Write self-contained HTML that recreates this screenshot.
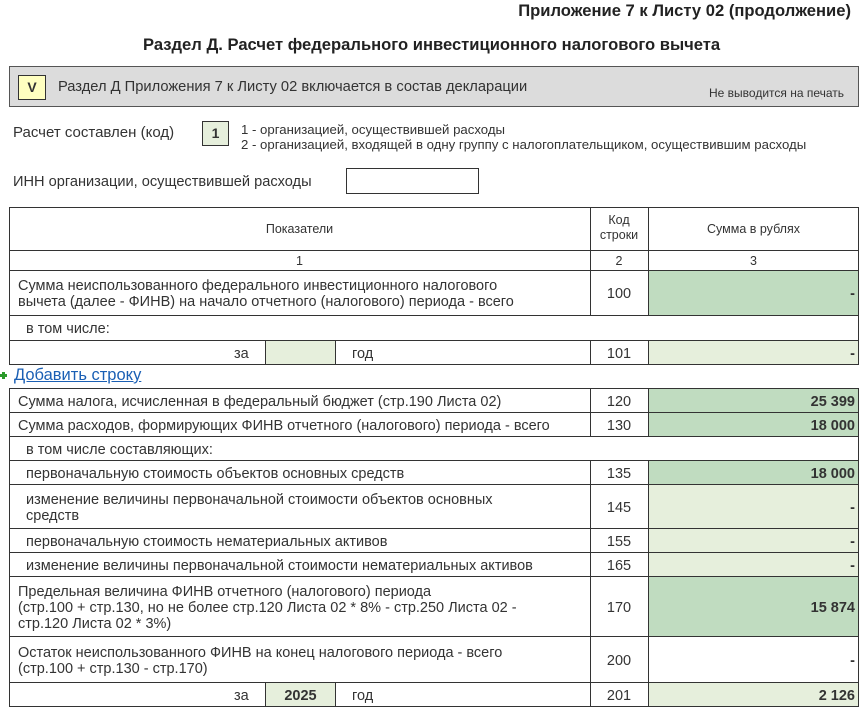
<!DOCTYPE html>
<html><head><meta charset="utf-8"><style>
*{box-sizing:border-box;margin:0;padding:0}
body{width:859px;height:707px;background:#fff;font-family:"Liberation Sans",Arial,sans-serif;font-size:14.5px;color:#333;position:relative;overflow:hidden}
.a{position:absolute}
.b{position:absolute;border:1px solid #333}
.t{position:absolute;white-space:nowrap;line-height:16px}
.g1{background:#e6efdc}.g2{background:#c0dcc0}
.r{text-align:right;padding-right:3px;font-weight:bold;font-size:14.5px}
.c{text-align:center}
</style></head><body>
<div class="t" style="right:8px;top:2px;font-size:16.6px;font-weight:bold;color:#222;line-height:18px">Приложение 7 к Листу 02 (продолжение)</div>
<div class="t" style="left:143px;top:36px;font-size:16.6px;font-weight:bold;color:#222;line-height:18px">Раздел Д. Расчет федерального инвестиционного налогового вычета</div>

<div class="b" style="left:9px;top:66px;width:850px;height:41px;background:#dcdcdc;border-color:#555"></div>
<div class="b" style="left:18px;top:75px;width:28px;height:25px;background:#ffffc0;text-align:center;line-height:23px;font-weight:bold;font-size:14px">V</div>
<div class="t" style="left:58px;top:79px;font-size:14.7px">Раздел Д Приложения 7 к Листу 02 включается в состав декларации</div>
<div class="t" style="left:709px;top:85px;font-size:12px">Не выводится на печать</div>

<div class="t" style="left:13px;top:125px;font-size:15px">Расчет составлен (код)</div>
<div class="b" style="left:202px;top:121px;width:27px;height:25px;background:#e6efdc;text-align:center;line-height:23px;font-weight:bold;font-size:14px">1</div>
<div class="t" style="left:241px;top:122px;font-size:13.2px;line-height:15px">1 - организацией, осуществившей расходы<br>2 - организацией, входящей в одну группу с налогоплательщиком, осуществившим расходы</div>
<div class="t" style="left:13px;top:174px;font-size:14.6px">ИНН организации, осуществившей расходы</div>
<div class="b" style="left:346px;top:168px;width:133px;height:26px"></div>

<div class="b" style="left:9px;top:207px;width:850px;height:64px"></div>
<div class="a" style="left:9px;top:250px;width:850px;height:1px;background:#333"></div>
<div class="a" style="left:590px;top:207px;width:1px;height:64px;background:#333"></div>
<div class="a" style="left:648px;top:207px;width:1px;height:64px;background:#333"></div>
<div class="t c" style="left:9px;top:221px;width:581px;font-size:12.5px">Показатели</div>
<div class="t c" style="left:590px;top:213px;width:58px;font-size:12.5px;line-height:15px">Код<br>строки</div>
<div class="t c" style="left:648px;top:221px;width:211px;font-size:12.5px">Сумма в рублях</div>
<div class="t c" style="left:9px;top:253px;width:581px;font-size:12.5px">1</div>
<div class="t c" style="left:590px;top:253px;width:58px;font-size:12.5px">2</div>
<div class="t c" style="left:648px;top:253px;width:211px;font-size:12.5px">3</div>

<div id="rows"></div>
<script>
var rows=[
[270,46,'Сумма неиспользованного федерального инвестиционного налогового<br>вычета (далее - ФИНВ) на начало отчетного (налогового) периода - всего',18,'100','g2','-'],
[315,26,'в том числе:',26,null],
[340,25,'',0,'101','g1','-','za',''],
[388,25,'Сумма налога, исчисленная в федеральный бюджет (стр.190 Листа 02)',18,'120','g2','25 399'],
[412,25,'Сумма расходов, формирующих ФИНВ отчетного (налогового) периода - всего',18,'130','g2','18 000'],
[436,25,'в том числе составляющих:',26,null],
[460,25,'первоначальную стоимость объектов основных средств',26,'135','g2','18 000'],
[484,45,'изменение величины первоначальной стоимости объектов основных<br>средств',26,'145','g1','-'],
[528,25,'первоначальную стоимость нематериальных активов',26,'155','g1','-'],
[552,25,'изменение величины первоначальной стоимости нематериальных активов',26,'165','g1','-'],
[576,61,'Предельная величина ФИНВ отчетного (налогового) периода<br>(стр.100 + стр.130, но не более стр.120 Листа 02 * 8% - стр.250 Листа 02 -<br>стр.120 Листа 02 * 3%)',18,'170','g2','15 874'],
[636,47,'Остаток неиспользованного ФИНВ на конец налогового периода - всего<br>(стр.100 + стр.130 - стр.170)',18,'200','','-'],
[682,25,'',0,'201','g1','2 126','za','2025']
];
var h='';
rows.forEach(function(r){
 var y=r[0],ht=r[1],n=(r[2].match(/<br>/g)||[]).length+1,ty=y+1+Math.round((ht-n*16)/2);
 var cy=y+1+Math.round((ht-16)/2);
 h+='<div class="b" style="left:9px;top:'+y+'px;width:850px;height:'+ht+'px"></div>';
 if(r[4]){
  h+='<div class="a '+r[5]+'" style="left:649px;top:'+(y+1)+'px;width:209px;height:'+(ht-2)+'px"></div>';
  h+='<div class="a" style="left:590px;top:'+y+'px;width:1px;height:'+ht+'px;background:#333"></div>';
  h+='<div class="a" style="left:648px;top:'+y+'px;width:1px;height:'+ht+'px;background:#333"></div>';
  h+='<div class="t c" style="left:590px;top:'+cy+'px;width:58px">'+r[4]+'</div>';
  h+='<div class="t r" style="left:649px;top:'+cy+'px;width:209px">'+r[6]+'</div>';
 }
 if(r[7]){
  h+='<div class="a g1" style="left:266px;top:'+(y+1)+'px;width:69px;height:'+(ht-2)+'px"></div>';
  h+='<div class="a" style="left:265px;top:'+y+'px;width:1px;height:'+ht+'px;background:#333"></div>';
  h+='<div class="a" style="left:335px;top:'+y+'px;width:1px;height:'+ht+'px;background:#333"></div>';
  h+='<div class="t" style="left:234px;top:'+cy+'px">за</div>';
  h+='<div class="t c" style="left:266px;top:'+cy+'px;width:69px;font-weight:bold">'+r[8]+'</div>';
  h+='<div class="t" style="left:352px;top:'+cy+'px">год</div>';
 }
 if(r[2]) h+='<div class="t" style="left:'+r[3]+'px;top:'+ty+'px">'+r[2]+'</div>';
});
document.getElementById('rows').innerHTML=h;
</script>
<div class="a" style="left:0;top:374px;width:7px;height:3px;background:#2a9a2a"></div>
<div class="a" style="left:2px;top:372px;width:3px;height:7px;background:#2a9a2a"></div>
<div class="t" style="left:14px;top:366px;font-size:16.5px;color:#1a5fb4;text-decoration:underline;line-height:19px">Добавить строку</div>
</body></html>
